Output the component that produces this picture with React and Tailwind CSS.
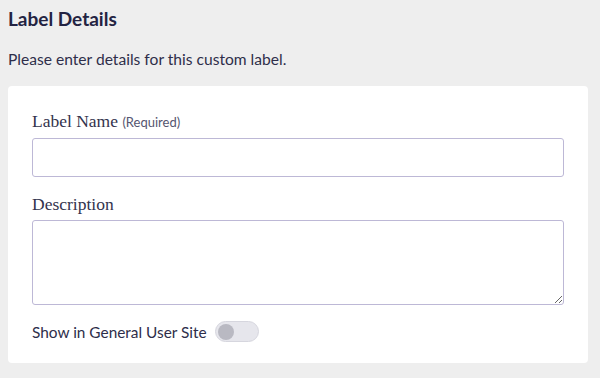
export default function App() {
  return (
    <div className="min-h-[378px] bg-[#eeeeee] pl-2 pr-3 pt-[7px] font-['Lato',sans-serif] text-[#232342]">
      <h1 className="text-[19px] font-bold leading-6">Label Details</h1>
      <p className="mt-[18px] text-[15.6px] leading-5 text-[#2e2e4a]">Please enter details for this custom label.</p>

      <div className="mt-[17px] rounded-[4px] bg-white px-6 pt-[25px] pb-[21px]">
        <label className="block font-['Liberation_Serif',serif] text-[17.5px] leading-5 text-[#33334d]">
          Label Name <span className="font-['Lato',sans-serif] text-[13px] text-[#555570]">(Required)</span>
        </label>
        <input
          type="text"
          className="mt-[6px] block h-[39px] w-full rounded-[3px] border border-[#bdb8d6] bg-white px-2 outline-none"
        />

        <label className="mt-[17px] block font-['Liberation_Serif',serif] text-[17.5px] leading-5 text-[#33334d]">
          Description
        </label>
        <textarea className="mt-[6px] block h-[85px] w-full rounded-[3px] border border-[#bdb8d6] bg-white px-2 outline-none" />

        <div className="mt-[16px] flex items-center gap-2">
          <span className="text-[15.4px] leading-5 text-[#2e2e4a]">Show in General User Site</span>
          <button className="flex h-[21px] w-[44px] items-center rounded-full border border-[#d6d6de] bg-[#e6e6ec] px-[2px]">
            <span className="h-[16px] w-[16px] rounded-full bg-[#b9b9c2]" />
          </button>
        </div>
      </div>
    </div>
  );
}
